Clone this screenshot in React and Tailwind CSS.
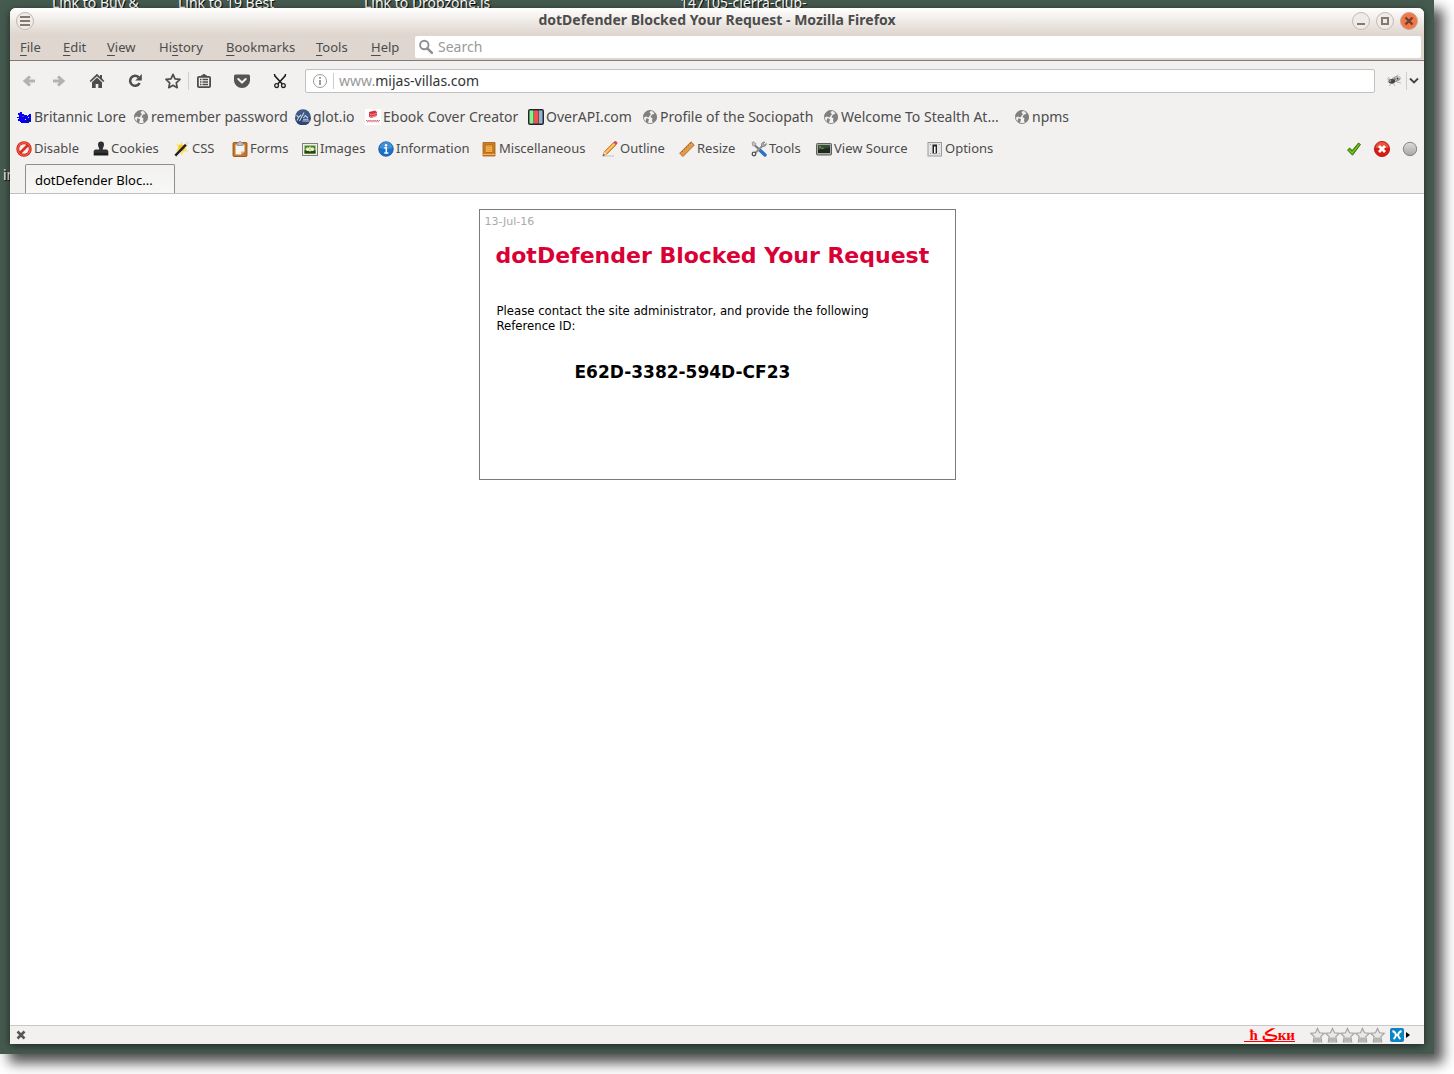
import React from "react";

const Svg = ({ children, className = "w-4 h-4" }) => (
  <svg viewBox="0 0 16 16" className={className + " shrink-0"} aria-hidden="true">
    {children}
  </svg>
);

const Back = () => (
  <Svg>
    <path d="M9 3.500 4 8l5 4.500M5 8h9" fill="none" stroke="#b3b2b1" strokeWidth="3" />
  </Svg>
);
const Forward = () => (
  <Svg>
    <path d="M7 3.500 12 8l-5 4.500M11 8H2" fill="none" stroke="#b3b2b1" strokeWidth="3" />
  </Svg>
);
const Home = () => (
  <Svg>
    <path d="M8 .8.6 7.900l1.200 1.200L8 3.300l6.200 5.800 1.200-1.200-2.400-2.300V2h-2v1.700z" fill="#4d4d4d" />
    <path d="M8 4.600 3 9.300V15h3.700v-4h2.600v4H13V9.300z" fill="#4d4d4d" />
  </Svg>
);
const Reload = () => (
  <Svg>
    <path d="M11.600 4.200A5 5 0 1 0 12.600 10" fill="none" stroke="#4d4d4d" strokeWidth="2.600" />
    <path d="M14.800 1v6.500H8.300z" fill="#4d4d4d" />
  </Svg>
);
const Star = () => (
  <Svg>
    <path d="m8 1.300 2 4.500 5 .6-3.700 3.400.9 4.900L8 12.300l-4.200 2.400.9-4.900L1 6.400l5-.6z" fill="none" stroke="#4d4d4d" strokeWidth="1.700" strokeLinejoin="round" />
  </Svg>
);
const ListIcon = () => (
  <Svg>
    <path d="M5 3.500V2.200h1.300a1.800 1.800 0 0 1 3.400 0H11v1.300z" fill="#4d4d4d" />
    <rect x="1.900" y="3.900" width="12.200" height="10.200" rx="1" fill="#f2f1f0" stroke="#4d4d4d" strokeWidth="1.800" />
    <path d="M4 6.500h1.500M6.500 6.500H12M4 9h1.500M6.500 9H12M4 11.500h1.500M6.500 11.500H12" stroke="#4d4d4d" strokeWidth="1.300" />
  </Svg>
);
const Pocket = () => (
  <Svg>
    <path d="M1.500 1.500h13A1.500 1.500 0 0 1 16 3v4.500a8 7.500 0 0 1-16 0V3a1.500 1.500 0 0 1 1.500-1.500z" fill="#555" />
    <path d="m4.300 6 3.700 3.600L11.700 6" fill="none" stroke="#f2f1f0" strokeWidth="2.100" strokeLinecap="round" strokeLinejoin="round" />
  </Svg>
);
const Scissors = () => (
  <Svg>
    <path d="m2.500 1 .3 1.800 7.500 8.200M13.500 1l-.3 1.800L5.700 11" fill="none" stroke="#1a1a1a" strokeWidth="1.500" />
    <circle cx="4.600" cy="12.600" r="1.900" fill="none" stroke="#222" strokeWidth="1.300" />
    <circle cx="11.400" cy="12.600" r="1.900" fill="none" stroke="#222" strokeWidth="1.300" />
  </Svg>
);
const Info = () => (
  <Svg>
    <circle cx="8" cy="8" r="6.500" fill="none" stroke="#9a9a9a" />
    <path d="M8 7v5M8 4v1.700" stroke="#8a8a8a" strokeWidth="1.700" />
  </Svg>
);
const Search = () => (
  <Svg>
    <circle cx="6.300" cy="6" r="4.200" fill="none" stroke="#8f8f8f" strokeWidth="1.900" />
    <path d="m9.300 9.300 4.600 4.600" stroke="#8f8f8f" strokeWidth="2.500" strokeLinecap="round" />
  </Svg>
);
const Fly = () => (
  <Svg>
    <ellipse cx="10" cy="6" rx="4.800" ry="2.800" transform="rotate(-22 10 6)" fill="#9a9a9a" />
    <path d="M7 5.500 13 3l1.500 1.500-5 3z" fill="#d4d4d4" />
    <ellipse cx="5.800" cy="8.300" rx="3.300" ry="2.400" fill="#444" />
    <path d="M1 5.500 5 8 1.500 9M5 10l-1.500 3M7 10l2 3M9.500 8.500 15 10M4 7 2.500 4M10 4l2-2.500" fill="none" stroke="#999" strokeWidth=".7" />
    <circle cx="4.500" cy="8" r=".8" fill="#aaa" />
    <circle cx="11.500" cy="5.500" r=".9" fill="#333" />
    <circle cx="9" cy="6" r=".8" fill="#333" />
  </Svg>
);

const Dragon = () => (
  <Svg>
    <path d="M1 8h2V6H2V4h2V3h2v2h2v1h3v1h1V6h1V5h2v8h-2v1H5v-1H4v-1H2v-2h1V9H1z" fill="#00f" />
    <path d="M11 9h1v1h-1zM13 9h1v1h-1zM10 11h4v1h-4z" fill="#113" />
    <path d="M12 8h1v1h-1zM9 10h1v1H9z" fill="#dde" />
    <path d="M6 7h2v1H6z" fill="#f02" />
  </Svg>
);
const Globe = () => (
  <Svg>
    <circle cx="8" cy="8" r="6.600" fill="#f1f1f1" stroke="#868686" strokeWidth=".9" />
    <path d="M2 4.500 5 2l4-.5-1.500 2.200L9 5 7.500 7 6.500 8.500 4 7.500l-1.500.8-1.100-.5zM10.500 2l3.200 2.500L15 8l-1 3.500-3 2.500-1-2.500.500-2L8.500 8 10 5.500 12.500 5zM4.500 9l2.500 1.300-.5 1.700L6 14.300l-2.500-2z" fill="#808080" />
  </Svg>
);
const Glot = () => (
  <Svg>
    <circle cx="8" cy="8" r="7.800" fill="#3f5a87" />
    <path d="M0 8.500a7.800 7.800 0 0 0 16 0z" fill="#2c4671" />
    <path d="m1.500 6 2 2.500L6 6M3.500 8.500 2 11.500M9 3.500 4.500 12M8 10.200h5.500M7.500 12h7M8.500 9l1.800-2.500L13 9" fill="none" stroke="#c6d2e6" strokeWidth="1.100" />
  </Svg>
);
const Ebook = () => (
  <Svg>
    <path d="M0 0h16v16H0z" fill="#fff" />
    <path d="m4 3 6-1.500 2 1.500v4L6 9 4 7.500z" fill="#d8323d" />
    <path d="m4.500 4.500 1.700 1.300L12 4.300M5 7l1.500 1L12 6.300" stroke="#ffb8bc" strokeWidth=".7" fill="none" />
    <path d="M1 11.500h14M2 12.700h12" stroke="#d66e76" strokeWidth="1" strokeDasharray="1.500 .6" />
  </Svg>
);
const OverApi = () => (
  <Svg>
    <rect x=".6" y=".6" width="14.800" height="14.800" rx="1.500" fill="#2c3440" stroke="#20252e" strokeWidth="1.200" />
    <path d="M1.500 1.500h4v13h-4z" fill="#8cf08a" />
    <path d="M6 1.500h4.500v13H6z" fill="#ef5350" />
    <path d="M11 1.500h3.500v13H11z" fill="#8fb0d0" />
  </Svg>
);

const Disable = () => (
  <Svg>
    <circle cx="8" cy="8" r="7.700" fill="#c91f14" />
    <circle cx="8" cy="8" r="6.200" fill="none" stroke="#f25a43" strokeWidth="1.400" />
    <circle cx="8" cy="8" r="4.800" fill="#f4efee" />
    <path d="m4 12 8-8" stroke="#d9301f" strokeWidth="2.600" />
  </Svg>
);
const Cookies = () => (
  <Svg>
    <path d="M5 3.500a3 3 0 0 1 6 0C11 6 9.700 6.500 9.700 8.500h3.800c1 0 1.800 1 1.800 2.500H.7c0-1.500.8-2.500 1.800-2.500h3.800C6.300 6.500 5 6 5 3.500z" fill="#303030" />
    <path d="M.7 10.500h14.600V14.500H.7z" fill="#1d1d1d" />
    <path d="M1 11h14" stroke="#555" strokeWidth=".7" />
  </Svg>
);
const Wand = () => (
  <Svg>
    <path d="m7.500 0 1.700 4L14 3.500 11.500 7l3 4-4.500-.5L7.500 15 6 10.500 1 10l3.500-3L2 2.500l4 1.300z" fill="#fbe37c" />
    <circle cx="7.500" cy="7" r="3.300" fill="#fdc72c" />
    <path d="M1.300 14.700 12 3.700" stroke="#202020" strokeWidth="2.400" />
    <path d="m12 3.700 2.700-2.800" stroke="#e2e2e2" strokeWidth="2.400" />
  </Svg>
);
const Forms = () => (
  <Svg>
    <rect x="1" y="1.500" width="14" height="14" rx="1" fill="#c97526" stroke="#8f4a12" strokeWidth=".8" />
    <path d="M3.500 3.500h9v7l-3.500 3H3.500z" fill="#f5f5f3" />
    <path d="M9 13.500v-3h3.500z" fill="#b9b9b5" />
    <path d="M5 1.500h1.500L8 .2l1.500 1.300H11v3H5z" fill="#bcbcba" stroke="#777" strokeWidth=".6" />
  </Svg>
);
const Images = () => (
  <Svg>
    <rect x=".5" y="2.500" width="15" height="12" fill="#efefec" stroke="#7e8079" />
    <path d="M2.500 4.500h11v8h-11z" fill="#4c8c26" />
    <path d="M2.500 9.500h11v3h-11z" fill="#24480e" />
    <path d="M3.500 8.300 5 6.500l2 .3 1-1.500 1 1.500 2-.3 1.500 1.800L11 10l-2-.3-1 1-1-1-2 .3z" fill="#eef2dc" />
    <circle cx="8" cy="8.300" r="1.100" fill="#e6c832" />
  </Svg>
);
const Information = () => (
  <Svg>
    <circle cx="8" cy="8" r="7.300" fill="#1a72c9" stroke="#0d4f99" strokeWidth=".7" />
    <path d="M1.500 7a6.500 6 0 0 1 13 0c-4 1.500-9 1.500-13 0z" fill="#4390d8" />
    <path d="M6.300 6.800h2V12M6.300 12.100h4" fill="none" stroke="#fff" strokeWidth="1.500" />
    <circle cx="8" cy="4.200" r="1.200" fill="#fff" />
  </Svg>
);
const Misc = () => (
  <Svg>
    <path d="M2 1.500h12V15H2z" fill="#cf7d21" stroke="#a55b10" strokeWidth=".8" />
    <path d="M4.200 4h7.600v7.500H4.200z" fill="#f4b35a" stroke="#a9640f" strokeWidth=".8" />
    <path d="M5.500 5.700h5M5.500 7.700h5M5.500 9.700h5" stroke="#d98a2d" strokeWidth=".8" />
    <path d="M2 13.500h12" stroke="#f0b76b" />
  </Svg>
);
const Outline = () => (
  <Svg>
    <path d="M1 15h11" stroke="#c5c3c0" />
    <path d="M.8 15 2.500 10.500l9-9L14 4l-9 9z" fill="#f29a2b" stroke="#b9640d" strokeWidth=".7" />
    <path d="m3.700 11.500 9-9" stroke="#fdd58e" strokeWidth="1.100" />
    <path d="M.8 15 2.500 10.500 5 13z" fill="#ecd9bd" />
    <path d="m.8 15 .8-2L2.800 14z" fill="#333" />
    <path d="m11.500 1.500 1.200-1.200c1-.8 3.200 1 2.600 2.400L14 4z" fill="#d24a5c" />
  </Svg>
);
const Resize = () => (
  <Svg>
    <path d="M.6 12.300 12 .8 15.300 4 4 15.500z" fill="#e29a4d" stroke="#a7611c" strokeWidth=".8" />
    <path d="m3 10 1 1M5 8l1 1M7 6l1 1M9 4l1 1M11 2l1 1" stroke="#a7611c" strokeWidth=".8" />
  </Svg>
);
const Tools = () => (
  <Svg>
    <path d="M4 4.500 13 13" stroke="#73777a" strokeWidth="2" />
    <path d="M1 1.500 2.500.8 4.800 2.500 4.300 4.500 2 5z" fill="#c4c6c8" stroke="#777" strokeWidth=".6" />
    <path d="M9 9.200 14 14" stroke="#2d6fc9" strokeWidth="3.400" strokeLinecap="round" />
    <path d="M12.300 4 3.800 12.500" stroke="#8c8f91" strokeWidth="2" />
    <path d="M10.500 4.500C10 2 12 .500 14 1l-1.700 1.700 1.200 1.200L15.400 2.500C15.700 4.500 13.500 6 11.500 5.500z" fill="#a9acae" stroke="#666" strokeWidth=".6" />
    <circle cx="3" cy="13" r="1.800" fill="#eee" stroke="#555" strokeWidth="1.300" />
  </Svg>
);
const Source = () => (
  <Svg>
    <rect x=".5" y="2.500" width="15" height="11.500" rx=".8" fill="#a9aaa7" stroke="#5f615e" />
    <path d="M2 4h12v8H2z" fill="#1d2a1c" />
    <path d="M2 4h12v2.500L2 9z" fill="#394a36" />
    <path d="m3.200 5 1.500 1-1.500 1M5.500 7.300h2" fill="none" stroke="#7fdc4b" strokeWidth=".8" />
  </Svg>
);
const Options = () => (
  <Svg>
    <rect x="1" y="1.500" width="13.500" height="13.500" fill="#e4e4e4" stroke="#9b9b9b" />
    <path d="M5.500 3.500h4.500v9H5.500z" fill="#222" />
    <path d="M7 5.500h1.600V12H7z" fill="#fff" />
    <path d="M3 3.500h1M3 12.500h1M11.800 3.500h1M11.800 12.500h1" stroke="#999" />
  </Svg>
);
const Check = () => (
  <Svg>
    <path d="m1.500 9 2.200-2 2.500 2.500L12.500 2l2 1.500-8 10.700z" fill="#55a807" stroke="#2f6b03" strokeWidth=".9" strokeLinejoin="round" />
    <path d="m2.800 9 3.300 3 7-8.500" fill="none" stroke="#8ad13f" strokeWidth=".8" />
  </Svg>
);
const ErrorIcon = () => (
  <Svg>
    <circle cx="8" cy="8" r="7.600" fill="#d91c12" stroke="#b30d07" strokeWidth=".8" />
    <path d="M1.500 7a6.500 6 0 0 1 13 0z" fill="#ef5340" />
    <path d="m5 5 6 6M11 5l-6 6" stroke="#fff" strokeWidth="2.800" />
  </Svg>
);
const GrayDot = () => (
  <Svg>
    <defs>
      <linearGradient id="dot" x1="0" y1="0" x2="0" y2="1">
        <stop offset="0" stopColor="#dcdcdc" />
        <stop offset="1" stopColor="#a6a6a6" />
      </linearGradient>
    </defs>
    <circle cx="8" cy="8" r="6.700" fill="url(#dot)" stroke="#7c7c7c" strokeWidth=".9" />
  </Svg>
);
const RatingStar = () => (
  <svg viewBox="0 0 15 16" className="h-4 w-[15px] shrink-0" aria-hidden="true">
    <path d="m7.500 1.500 2 4.300 4.800.5-3.500 3.300.9 5.400H3.300l.9-5.400L.7 6.300l4.800-.5z" fill="#e8e8e7" stroke="#a3a3a2" strokeWidth="1.200" />
    <path d="M4.500 10.500h6l.7 4H3.800z" fill="#b5b5b4" />
  </svg>
);

const menus = [
  ["", "F", "ile", "w-[43px]"],
  ["", "E", "dit", "w-[44px]"],
  ["", "V", "iew", "w-[52px]"],
  ["Hi", "s", "tory", "w-[67px]"],
  ["", "B", "ookmarks", "w-[90px]"],
  ["", "T", "ools", "w-[55px]"],
  ["", "H", "elp", "w-[44px]"],
];

const bookmarks = [
  [Dragon, "Britannic Lore", "w-[117px]"],
  [Globe, "remember password", "w-[162px]"],
  [Glot, "glot.io", "w-[70px]"],
  [Ebook, "Ebook Cover Creator", "w-[163px]"],
  [OverApi, "OverAPI.com", "w-[114px]"],
  [Globe, "Profile of the Sociopath", "w-[181px]"],
  [Globe, "Welcome To Stealth At...", "w-[191px]"],
  [Globe, "npms", "w-[60px]"],
];

const devTools = [
  [Disable, "Disable", "w-[77px]"],
  [Cookies, "Cookies", "w-[81px]"],
  [Wand, "CSS", "w-[58px]"],
  [Forms, "Forms", "w-[70px]"],
  [Images, "Images", "w-[76px]"],
  [Information, "Information", "w-[103px]"],
  [Misc, "Miscellaneous", "w-[121px]"],
  [Outline, "Outline", "w-[77px]"],
  [Resize, "Resize", "w-[72px]"],
  [Tools, "Tools", "w-[65px]"],
  [Source, "View Source", "w-[111px]"],
  [Options, "Options", "w-[80px]"],
];

const NavButton = ({ label, className = "w-[38px] h-6", children }) => (
  <button aria-label={label} className={className + " flex shrink-0 items-center justify-center"}>
    {children}
  </button>
);

const DesktopLabel = ({ className, children }) => (
  <span className={className + " absolute whitespace-nowrap text-sm leading-4 text-white [text-shadow:1px_1px_1px_#000]"}>
    {children}
  </span>
);

export default function App() {
  return (
    <div className="flex min-h-screen overflow-hidden bg-white pr-5 pb-5 font-['Noto_Sans',sans-serif] text-[13px] text-[#4c4c4c]">
      <div className="relative flex flex-1 flex-col bg-[#465b50] px-2.5 pt-2 pb-2.5 shadow-[9px_9px_12px_rgba(0,0,0,0.68)]">
        <DesktopLabel className="left-[52px] -top-[5px]">Link to Buy &amp;</DesktopLabel>
        <DesktopLabel className="left-[178px] -top-[5px]">Link to 19 Best</DesktopLabel>
        <DesktopLabel className="left-[364px] -top-[5px]">Link to Dropzone.js</DesktopLabel>
        <DesktopLabel className="left-[680px] -top-[5px]">147105-cierra-club-</DesktopLabel>
        <DesktopLabel className="left-[3px] top-[167px]">in</DesktopLabel>

        <main className="relative flex flex-1 flex-col overflow-hidden rounded-t-md bg-white shadow-[0_2px_8px_rgba(0,0,0,0.6)]">
          <header className="border-b border-[#7f7b78] bg-[#dfd6cf] bg-linear-to-b from-white to-[#dfd6cf] to-50%">
            <div className="flex h-[26px] items-center px-1.5">
              <div className="flex flex-1">
                <button aria-label="Window menu" className="flex size-[18px] items-center justify-center rounded-full border border-[#bfb6ae] bg-[#f0ebe7]">
                  <Svg>
                    <path d="M3 4h10M3 8h10M3 12h10" stroke="#807a70" strokeWidth="2" />
                  </Svg>
                </button>
              </div>
              <h1 className="pb-0.5 text-sm leading-5 font-bold">dotDefender Blocked Your Request - Mozilla Firefox</h1>
              <div className="flex flex-1 justify-end gap-1.5">
                <button aria-label="Minimize" className="flex size-[18px] items-center justify-center rounded-full border border-[#c4bbb3] bg-[#f0ebe7]">
                  <Svg><path d="M4 11h8" stroke="#807a70" strokeWidth="2" /></Svg>
                </button>
                <button aria-label="Maximize" className="flex size-[18px] items-center justify-center rounded-full border border-[#c4bbb3] bg-[#f0ebe7]">
                  <Svg><path d="M5 5h6v6H5z" fill="none" stroke="#807a70" strokeWidth="2" /></Svg>
                </button>
                <button aria-label="Close" className="flex size-[18px] items-center justify-center rounded-full border border-[#c9a995] bg-[#f07848]">
                  <Svg><path d="m4.500 4.500 7 7M11.500 4.500l-7 7" stroke="#6d4030" strokeWidth="2.300" /></Svg>
                </button>
              </div>
            </div>
            <div className="flex h-[26px] items-center pr-[3px]">
              <nav className="flex">
                {menus.map(([a, b, c, width]) => (
                  <button key={b + c} className={width + " pl-2.5 text-left leading-5"}>
                    {a}<span className="underline underline-offset-3">{b}</span>{c}
                  </button>
                ))}
              </nav>
              <label className="ml-2.5 flex h-[22px] flex-1 items-center gap-1 rounded-xs bg-white pl-[3px]">
                <Search />
                <input aria-label="Search" placeholder="Search" className="w-full bg-transparent text-sm outline-none placeholder:text-[#999]" />
              </label>
            </div>
          </header>

          <div className="border-b border-[#c2c1c0] bg-[#f2f1f0]">
            <div className="flex h-10 items-center pr-[3px] pl-1">
              <NavButton label="Back" className="h-6 w-[30px]"><Back /></NavButton>
              <NavButton label="Forward" className="mr-1 h-6 w-[30px]"><Forward /></NavButton>
              <NavButton label="Home"><Home /></NavButton>
              <NavButton label="Reload"><Reload /></NavButton>
              <NavButton label="Bookmark this page" className="h-[18px] w-[35px] border-r border-[#d0cfce] pl-1"><Star /></NavButton>
              <NavButton label="Show bookmarks" className="mr-1 h-6 w-[30px]"><ListIcon /></NavButton>
              <NavButton label="Save to Pocket"><Pocket /></NavButton>
              <NavButton label="Clip"><Scissors /></NavButton>
              <div className="ml-1.5 flex h-6 flex-1 items-center rounded-xs border border-[#c2c1c0] bg-white pl-1.5">
                <Info />
                <div className="ml-[5px] h-4 border-l border-[#ccc]" />
                <a href="#address" className="ml-[5px] text-sm"><span className="text-[#999]">www.</span><span className="text-[#333]">mijas-villas.com</span></a>
              </div>
              <NavButton label="Extension" className="ml-2.5 h-[18px] w-[22px] border-r border-[#d0cfce] pr-1"><Fly /></NavButton>
              <button aria-label="More tools" className="flex w-3.5 items-center justify-center">
                <svg viewBox="0 0 10 10" className="size-2.5"><path d="m1 2.500 4 4 4-4" fill="none" stroke="#444" strokeWidth="1.800" /></svg>
              </button>
            </div>

            <nav className="flex h-8 items-center pl-1.5 text-sm">
              {bookmarks.map(([Icon, name, width]) => (
                <a key={name} href="#bookmark" className={width + " flex shrink-0 items-center gap-0.5 whitespace-nowrap"}><Icon />{name}</a>
              ))}
            </nav>

            <div className="flex h-8 items-center pr-1.5 pl-1.5">
              {devTools.map(([Icon, name, width]) => (
                <button key={name} className={width + " flex shrink-0 items-center gap-0.5 whitespace-nowrap"}><Icon />{name}</button>
              ))}
              <div className="flex flex-1 justify-end gap-3">
                <button aria-label="Standards mode"><Check /></button>
                <button aria-label="Errors"><ErrorIcon /></button>
                <button aria-label="Status"><GrayDot /></button>
              </div>
            </div>

            <div className="-mt-px flex pl-[15px]">
              <button className="h-[29px] w-[150px] rounded-t-xs border border-b-0 border-[#8b8f8f] bg-linear-to-b from-[#f2f1f0] to-[#f8f8f7] pt-1 pl-[9px] text-left text-black">dotDefender Bloc...</button>
            </div>
          </div>

          <section className="flex-1 bg-white pt-[15px] font-['DejaVu_Sans',sans-serif] text-black">
            <article className="mx-auto min-h-[271px] w-[477px] border border-[#7b7b7b] px-[5px] pt-1">
              <p className="text-[11px] leading-4 text-[#aaa]">13-Jul-16</p>
              <h2 className="mt-3 pl-[11px] text-[22px] leading-7 font-bold whitespace-nowrap text-[#d90036]">dotDefender Blocked Your Request</h2>
              <p className="mt-[33px] w-[400px] pl-3 font-['DejaVu_Sans_Condensed','DejaVu_Sans',sans-serif] text-[13px] leading-[15px]">Please contact the site administrator, and provide the following Reference ID:</p>
              <p className="mt-[27px] pl-[90px] text-[17px] leading-6 font-bold">E62D-3382-594D-CF23</p>
            </article>
          </section>

          <footer className="flex h-[19px] items-center border-t border-[#c8c8c8] bg-[#f2f1f0] pr-3.5 pl-1.5">
            <button aria-label="Close add-on bar">
              <svg viewBox="0 0 10 10" className="size-2.5"><path d="m1.500 1.500 7 7M8.500 1.500l-7 7" stroke="#555" strokeWidth="2.500" /></svg>
            </button>
            <a href="#translate" className="mr-[15px] ml-auto border-b border-[#f00] pl-1.5 font-['Liberation_Serif','DejaVu_Serif',serif] text-[15px] leading-3 font-bold text-[#f00]">ћ ڪки</a>
            <div className="flex" role="img" aria-label="Rating">
              {[1, 2, 3, 4, 5].map((n) => <RatingStar key={n} />)}
            </div>
            <button aria-label="Share" className="ml-[5px] flex items-center gap-0.5">
              <svg viewBox="0 0 14 14" className="size-3.5">
                <rect width="14" height="14" rx="2" fill="#0a85c7" />
                <path d="M2.500 3C4 3.500 5.500 4.500 6 7c-.5 2.500-1 3-2.500 4M11.500 3C10 3.500 8.500 4.500 8 7c.5 2.500 1 3 2.500 4M6 7h2" fill="none" stroke="#fff" strokeWidth="1.900" />
              </svg>
              <svg viewBox="0 0 4 6" className="h-1.5 w-1"><path d="m0 0 4 3-4 3z" fill="#000" /></svg>
            </button>
          </footer>
        </main>
      </div>
    </div>
  );
}
